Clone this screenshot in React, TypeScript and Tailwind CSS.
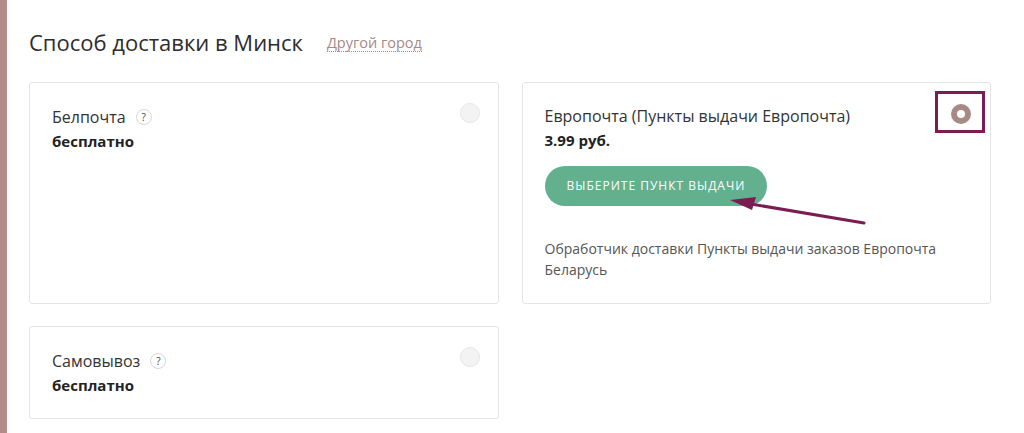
import React from "react";

const font = { fontFamily: '"Open Sans", "Noto Sans", sans-serif' };

function Help() {
  return (
    <span className="ml-[10px] inline-flex h-[16px] w-[16px] items-center justify-center rounded-full border border-[#d8d8d8] text-[10px] leading-none text-[#444]">
      ?
    </span>
  );
}

function Radio({ checked }: { checked?: boolean }) {
  if (checked) {
    return (
      <span className="flex h-[20px] w-[20px] shrink-0 items-center justify-center rounded-full bg-[#a88a85]">
        <span className="h-[8px] w-[8px] rounded-full bg-white" />
      </span>
    );
  }
  return <span className="h-[20px] w-[20px] shrink-0 rounded-full border border-[#e6e6e6] bg-[#f3f3f3]" />;
}

export default function App() {
  return (
    <div className="relative flex h-[433px] w-[1024px] overflow-hidden bg-white text-[#333]" style={font}>
      <div className="w-[7px] shrink-0 bg-[#b18c89]" />
      <div className="flex-1 pl-[22px] pr-[33px] pt-[28px]">
        <div className="flex items-center">
          <h2 className="text-[22px] font-normal leading-[28px] text-[#2d2d2d]">Способ доставки в Минск</h2>
          <a className="ml-[24px] mt-[3px] border-b border-dotted border-[#a48a87] text-[14.5px] leading-[16px] text-[#a48a87]">
            Другой город
          </a>
        </div>
        <div className="mt-[26px] grid grid-cols-2 gap-x-[23px] gap-y-[22px]">
          <div className="flex justify-between rounded-[3px] border border-[#e4e4e4] pl-[22px] pr-[18px] pt-[20px]">
            <div className="pt-[2px]">
              <div className="flex items-center text-[16px] leading-[24px] text-[#333]">
                Белпочта <Help />
              </div>
              <div className="text-[15px] font-bold leading-[24px] text-[#222]">бесплатно</div>
            </div>
            <Radio />
          </div>
          <div className="relative flex justify-between rounded-[3px] border border-[#e4e4e4] pb-[23px] pl-[22px] pr-[19px] pt-[21px]">
            <div>
              <div className="text-[16px] leading-[24px] text-[#333]">Европочта (Пункты выдачи Европочта)</div>
              <div className="text-[15px] font-bold leading-[24px] text-[#222]">3.99 руб.</div>
              <button className="mt-[14px] h-[40px] rounded-full bg-[#63b08f] px-[22px] text-[12px] tracking-[1px] text-white">
                ВЫБЕРИТЕ ПУНКТ ВЫДАЧИ
              </button>
              <p className="mt-[32px] text-[14px] leading-[21px] text-[#555]">
                Обработчик доставки Пункты выдачи заказов Европочта
                <br />
                Беларусь
              </p>
            </div>
            <div>
              <Radio checked />
            </div>
            <div className="pointer-events-none absolute right-[5px] top-[8px] h-[42px] w-[50px] border-[3px] border-[#7b1d52]" />
          </div>
          <div className="flex justify-between rounded-[3px] border border-[#e4e4e4] pb-[21px] pl-[22px] pr-[18px] pt-[20px]">
            <div className="pt-[2px]">
              <div className="flex items-center text-[16px] leading-[24px] text-[#333]">
                Самовывоз <Help />
              </div>
              <div className="text-[15px] font-bold leading-[24px] text-[#222]">бесплатно</div>
            </div>
            <Radio />
          </div>
        </div>
      </div>
      <svg className="pointer-events-none absolute left-0 top-0" width="1024" height="433">
        <line x1="864" y1="223" x2="745" y2="203" stroke="#7b1d52" strokeWidth="3" strokeLinecap="round" />
        <polygon points="730,200 756,197 752,210" fill="#7b1d52" />
      </svg>
    </div>
  );
}
